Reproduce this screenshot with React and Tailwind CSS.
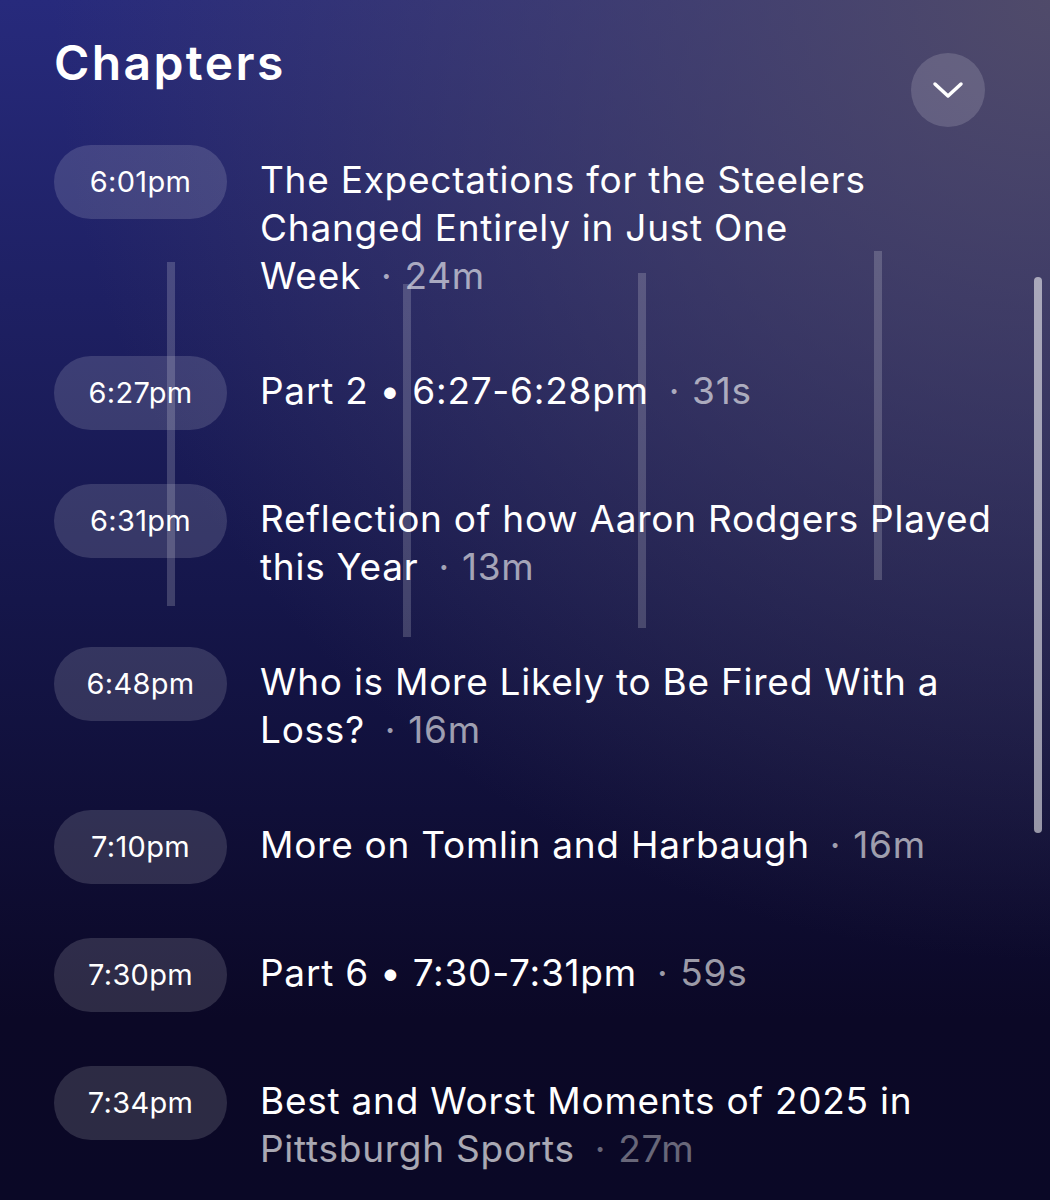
const chapters = [
  { time: '6:01pm', title: 'The Expectations for the Steelers Changed Entirely in Just One Week', length: '24m' },
  { time: '6:27pm', title: 'Part 2 • 6:27-6:28pm', length: '31s' },
  { time: '6:31pm', title: 'Reflection of how Aaron Rodgers Played this Year', length: '13m' },
  { time: '6:48pm', title: 'Who is More Likely to Be Fired With a Loss?', length: '16m' },
  { time: '7:10pm', title: 'More on Tomlin and Harbaugh', length: '16m' },
  { time: '7:30pm', title: 'Part 6 • 7:30-7:31pm', length: '59s' },
  { time: '7:34pm', title: 'Best and Worst Moments of 2025 in Pittsburgh Sports', length: '27m' },
]

// faint vertical bars sitting over the list
const bars = [
  { left: 167, top: 262, height: 344 },
  { left: 403, top: 284, height: 353 },
  { left: 638, top: 273, height: 355 },
  { left: 874, top: 251, height: 329 },
]

const ChapterRow = ({ chapter }) => {
  const words = chapter.title.split(' ')
  const last = words.pop()

  return (
    <div className="flex items-start gap-[33px]">
      <div className="w-[173px] h-[74px] shrink-0 rounded-full bg-white/[0.14] flex items-center justify-center text-[29px] tracking-[0.01em] text-white">
        {chapter.time}
      </div>
      <div className="flex-1 pt-[11px] pb-[2px] text-[37px] leading-[48px] tracking-[0.02em] text-white">
        {words.join(' ')}{' '}
        <span className="whitespace-nowrap">
          {last}
          <span className="ml-[20px] mr-[12px] text-white/60">·</span>
          <span className="text-white/60">{chapter.length}</span>
        </span>
      </div>
    </div>
  )
}

export default function App() {
  return (
    <div
      className="relative w-[1050px] h-[1200px] overflow-hidden bg-[radial-gradient(ellipse_95%_80%_at_100%_0%,rgba(84,78,104,0.9),rgba(84,78,104,0)_100%),linear-gradient(to_bottom,#272a7c,#15164a_50%,#0b0826_85%,#0a0826)]"
      style={{ fontFamily: 'Inter, "Noto Sans", sans-serif' }}
    >
      <div className="flex items-start justify-between pl-[54px]">
        <h1 className="pt-[39px] text-[48px] leading-[48px] font-semibold tracking-[0.05em] text-white">Chapters</h1>
        <button className="mt-[53px] mr-[65px] w-[74px] h-[74px] rounded-full bg-white/[0.15] flex items-center justify-center">
          <svg width="32" height="18" viewBox="0 0 32 18" fill="none">
            <path d="M3 3l13 12 13-12" stroke="white" strokeWidth="3.5" strokeLinecap="round" strokeLinejoin="round" />
          </svg>
        </button>
      </div>

      <div className="mt-[18px] pl-[54px] pr-[48px] flex flex-col gap-[54px]">
        {chapters.map((chapter, index) => (
          <ChapterRow key={index} chapter={chapter} />
        ))}
      </div>

      {bars.map((bar, index) => (
        <div
          key={index}
          className="absolute w-[8px] bg-white/[0.18]"
          style={{ left: bar.left, top: bar.top, height: bar.height }}
        />
      ))}

      {/* scrollbar */}
      <div className="absolute left-[1034px] top-[277px] w-[8px] h-[556px] rounded-full bg-white/[0.55]" />

      {/* bottom fade over the last title line */}
      <div className="absolute left-[240px] right-0 top-[1122px] bottom-0 bg-gradient-to-b from-[#0a0826]/0 to-[#0a0826]/35 to-[12%]" />
    </div>
  )
}
